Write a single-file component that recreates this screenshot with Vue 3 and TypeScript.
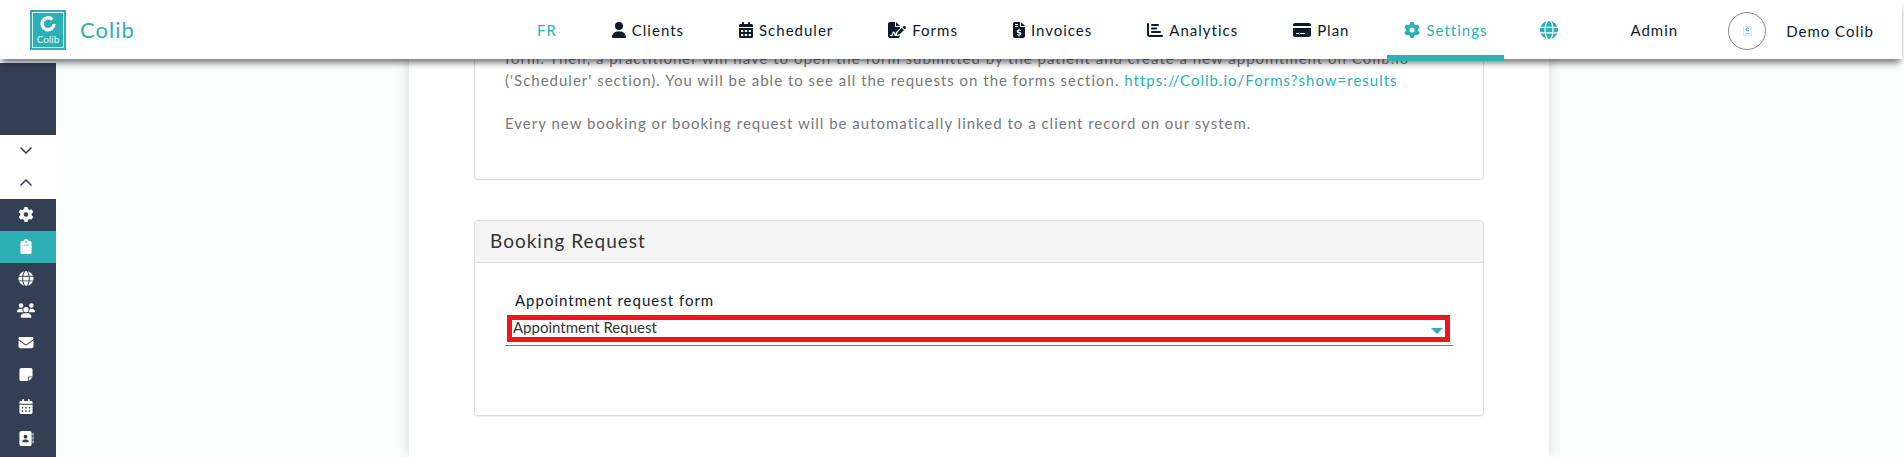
<script setup lang="ts">
import { ref } from 'vue'

interface Icon { box: string; w: number; d: string }
interface NavItem { label: string; icon: string; active?: boolean }

const icons: Record<string, Icon> = {
  user: { box: '0 0 448 512', w: 14, d: 'M224 256A128 128 0 1 0 224 0a128 128 0 1 0 0 256zm-45.7 48C79.8 304 0 383.8 0 482.3C0 498.7 13.3 512 29.7 512H418.3c16.4 0 29.7-13.3 29.7-29.7C448 383.8 368.2 304 269.7 304H178.3z' },
  calendar: { box: '0 0 448 512', w: 14, d: 'M96 32V64H48C21.500 64 0 85.500 0 112v48H448V112c0-26.500-21.500-48-48-48H352V32a32 32 0 0 0-64 0V64H160V32a32 32 0 0 0-64 0zM0 192H448V464c0 26.500-21.500 48-48 48H48c-26.500 0-48-21.500-48-48zM64 256v64h72v-64zM188 256v64h72v-64zM312 256v64h72v-64zM64 384v64h72v-64zM188 384v64h72v-64zM312 384v64h72v-64z' },
  calendarDays: { box: '0 0 448 512', w: 14, d: 'M96 32V64H48C21.500 64 0 85.500 0 112v48H448V112c0-26.500-21.500-48-48-48H352V32a32 32 0 0 0-64 0V64H160V32a32 32 0 0 0-64 0zM0 192H448V464c0 26.500-21.500 48-48 48H48c-26.500 0-48-21.500-48-48zM80 272v48h48v-48zM200 272v48h48v-48zM320 272v48h48v-48zM80 384v48h48v-48zM200 384v48h48v-48zM320 384v48h48v-48z' },
  signature: { box: '0 0 576 512', w: 18, d: 'M64 0C28.700 0 0 28.700 0 64V448c0 35.300 28.700 64 64 64H320c35.300 0 64-28.700 64-64V428l-40 12-96 8H80a16 16 0 0 1 0-32h16c14 0 26-9 30-22l20-66c5-16 19-26 35-26 17 0 31 11 36 27l17 55 7-5 11-44 9-19L384 198V160H256c-17.700 0-32-14.300-32-32V0zM256 0V128H384zM181 342l-24 76c-3 8-7 16-13 22h88l-26-20zM549 139c-16-16-41-16-57 0l-29 29 71 71 29-29c16-16 16-41 0-57zM441 191L312 320c-4 4-7 9-8 15l-15 60c-2 7 5 14 12 12l60-15c6-1 11-4 15-8L511 261z' },
  invoice: { box: '0 0 384 512', w: 12, d: 'M64 0C28.700 0 0 28.700 0 64V448c0 35.300 28.700 64 64 64H320c35.300 0 64-28.700 64-64V160H256c-17.700 0-32-14.300-32-32V0zM256 0V128H384zM64 64h96v32H64zM64 128h96v32H64zM174 216h36v30c16 2 32 6 44 11l-10 38c-20-8-38-12-54-11-14 1-22 6-22 13 0 10 12 14 42 23 32 9 57 23 57 56 0 29-21 52-57 58v30h-36v-30c-20-2-39-8-55-16l12-37c23 10 43 16 61 15 16 0 27-6 27-16 0-11-12-15-42-24-31-9-57-23-57-56 0-30 21-49 54-55z' },
  chart: { box: '0 0 512 512', w: 16, d: 'M32 32a32 32 0 0 1 32 32V400c0 8.800 7.200 16 16 16H480a32 32 0 0 1 0 64H80c-44.200 0-80-35.800-80-80V64a32 32 0 0 1 32-32zM128 96a32 32 0 0 1 32-32H352a32 32 0 0 1 0 64H160a32 32 0 0 1-32-32zM160 176H288a32 32 0 0 1 0 64H160a32 32 0 0 1 0-64zM160 288H416a32 32 0 0 1 0 64H160a32 32 0 0 1 0-64z' },
  card: { box: '0 0 576 512', w: 18, d: 'M64 32C28.700 32 0 60.700 0 96v32H576V96c0-35.300-28.700-64-64-64zM576 192H0V416c0 35.300 28.700 64 64 64H512c35.300 0 64-28.700 64-64zM96 352h96v32H96zM224 352h160v32H224z' },
  gear: { box: '0 0 512 512', w: 16, d: 'M495.9 166.6c3.2 8.7 .5 18.4-6.4 24.6l-43.3 39.4c1.1 8.3 1.7 16.8 1.7 25.4s-.6 17.1-1.7 25.4l43.3 39.4c6.9 6.2 9.600 15.900 6.400 24.600c-4.400 11.900-9.700 23.300-15.800 34.300l-4.700 8.100c-6.600 11-14 21.400-22.100 31.200c-5.900 7.200-15.700 9.600-24.500 6.800l-55.700-17.700c-13.400 10.300-28.200 18.900-44 25.400l-12.500 57.100c-2 9.100-9 16.300-18.200 17.800c-13.800 2.300-28 3.500-42.500 3.500s-28.700-1.200-42.500-3.500c-9.200-1.500-16.200-8.700-18.200-17.800l-12.500-57.100c-15.800-6.500-30.600-15.100-44-25.400L83.100 425.900c-8.800 2.800-18.600 .3-24.500-6.800c-8.100-9.800-15.500-20.200-22.100-31.200l-4.700-8.100c-6.100-11-11.400-22.400-15.800-34.300c-3.200-8.700-.5-18.400 6.400-24.600l43.300-39.400C64.600 273.100 64 264.600 64 256s.6-17.100 1.700-25.400L22.400 191.200c-6.900-6.200-9.600-15.900-6.400-24.600c4.400-11.900 9.700-23.300 15.800-34.300l4.700-8.100c6.600-11 14-21.400 22.100-31.200c5.900-7.200 15.700-9.600 24.500-6.800l55.700 17.700c13.400-10.300 28.200-18.900 44-25.400l12.500-57.100c2-9.100 9-16.300 18.200-17.800C227.300 1.200 241.500 0 256 0s28.700 1.200 42.500 3.500c9.200 1.500 16.200 8.700 18.200 17.800l12.500 57.100c15.800 6.500 30.600 15.100 44 25.400l55.700-17.700c8.800-2.800 18.600-.3 24.500 6.800c8.100 9.800 15.500 20.200 22.100 31.200l4.700 8.100c6.100 11 11.400 22.400 15.800 34.300zM256 336a80 80 0 1 0 0-160 80 80 0 1 0 0 160z' },
  globe: { box: '0 0 512 512', w: 18, d: 'M352 256c0 22.2-1.2 43.6-3.3 64H163.3c-2.2-20.4-3.3-41.8-3.3-64s1.2-43.6 3.3-64H348.7c2.2 20.4 3.3 41.8 3.3 64zm28.800-64H503.900c5.300 20.500 8.100 41.900 8.100 64s-2.800 43.500-8.100 64H380.800c2.100-20.600 3.200-42 3.200-64s-1.100-43.400-3.200-64zm112.600-32H376.700c-10-63.900-29.800-117.400-55.300-151.600c78.300 20.700 142 77.500 171.900 151.600zm-149.100 0H167.700c6.100-36.400 15.500-68.600 27-94.700c10.500-23.600 22.200-40.700 33.500-51.500C239.400 3.200 248.700 0 256 0s16.600 3.200 27.800 13.800c11.300 10.800 23 27.900 33.500 51.500c11.600 26 20.900 58.200 27 94.700zm-209 0H18.600C48.600 85.900 112.200 29.100 190.600 8.400C165.100 42.600 145.300 96.100 135.300 160zM8.100 192H131.200c-2.100 20.600-3.200 42-3.200 64s1.100 43.400 3.200 64H8.100C2.800 299.500 0 278.100 0 256s2.800-43.500 8.100-64zM194.700 446.600c-11.600-26-20.900-58.200-27-94.600H344.300c-6.100 36.400-15.500 68.600-27 94.600c-10.500 23.600-22.200 40.700-33.500 51.500C272.600 508.800 263.300 512 256 512s-16.600-3.200-27.800-13.800c-11.300-10.800-23-27.900-33.500-51.500zM135.300 352c10 63.900 29.800 117.400 55.300 151.600C112.200 482.900 48.600 426.100 18.600 352H135.300zm358.100 0c-30 74.100-93.600 130.900-171.900 151.600c25.500-34.200 45.200-87.700 55.300-151.600H493.400z' },
  clipboard: { box: '0 0 384 512', w: 12, d: 'M192 0c-41.800 0-77.400 26.700-90.500 64H64C28.700 64 0 92.700 0 128V448c0 35.300 28.700 64 64 64H320c35.300 0 64-28.700 64-64V128c0-35.300-28.700-64-64-64H282.500C269.400 26.700 233.800 0 192 0zm0 64a32 32 0 1 1 0 64 32 32 0 1 1 0-64zM112 192H272a16 16 0 0 1 0 32H112a16 16 0 0 1 0-32z' },
  users: { box: '0 0 640 512', w: 18, d: 'M144 0a80 80 0 1 1 0 160A80 80 0 1 1 144 0zM512 0a80 80 0 1 1 0 160A80 80 0 1 1 512 0zM0 298.700C0 239.800 47.800 192 106.700 192h42.700c15.900 0 31 3.500 44.600 9.700-1.300 7.200-1.900 14.700-1.900 22.300 0 38.200 16.800 72.500 43.300 96H21.300C9.600 320 0 310.400 0 298.700zM405.300 320c26.600-23.500 43.300-57.800 43.300-96 0-7.600-.7-15-1.900-22.300 13.600-6.300 28.700-9.700 44.600-9.700h42.700C592.200 192 640 239.800 640 298.700c0 11.800-9.600 21.300-21.300 21.300zM224 224a96 96 0 1 1 192 0 96 96 0 1 1-192 0zM128 485.300C128 411.700 187.700 352 261.300 352h117.400C452.300 352 512 411.700 512 485.300c0 14.700-11.900 26.700-26.700 26.700H154.700c-14.700 0-26.700-11.900-26.700-26.700z' },
  mail: { box: '0 0 512 512', w: 15, d: 'M48 64C21.500 64 0 85.500 0 112c0 15.100 7.100 29.300 19.200 38.400L236.800 313.600c11.400 8.500 27 8.500 38.400 0L492.800 150.400c12.100-9.100 19.200-23.300 19.200-38.400 0-26.500-21.500-48-48-48zM0 176V384c0 35.300 28.700 64 64 64H448c35.300 0 64-28.700 64-64V176L294.400 339.200c-22.800 17.100-54 17.100-76.800 0z' },
  note: { box: '0 0 448 512', w: 13, d: 'M64 32C28.700 32 0 60.700 0 96V416c0 35.300 28.700 64 64 64H288V368c0-26.500 21.500-48 48-48H448V96c0-35.300-28.700-64-64-64zM448 352H336c-8.800 0-16 7.200-16 16V480z' },
  contacts: { box: '0 0 512 512', w: 15, d: 'M96 0C60.700 0 32 28.700 32 64V448c0 35.300 28.700 64 64 64H384c35.300 0 64-28.700 64-64V64c0-35.300-28.700-64-64-64zM208 288h64c44.200 0 80 35.800 80 80 0 8.800-7.200 16-16 16H144c-8.800 0-16-7.200-16-16 0-44.200 35.800-80 80-80zM240 128a64 64 0 1 1 0 128 64 64 0 1 1 0-128zM480 64h32v96h-32zM480 192h32v96h-32zM480 320h32v96h-32z' },
}

const nav: NavItem[] = [
  { label: 'Clients', icon: 'user' },
  { label: 'Scheduler', icon: 'calendar' },
  { label: 'Forms', icon: 'signature' },
  { label: 'Invoices', icon: 'invoice' },
  { label: 'Analytics', icon: 'chart' },
  { label: 'Plan', icon: 'card' },
  { label: 'Settings', icon: 'gear', active: true },
]

const side = [
  { icon: 'gear', name: 'General' },
  { icon: 'clipboard', name: 'Booking', active: true },
  { icon: 'globe', name: 'Website' },
  { icon: 'users', name: 'Team' },
  { icon: 'mail', name: 'Messages' },
  { icon: 'note', name: 'Notes' },
  { icon: 'calendarDays', name: 'Calendar' },
  { icon: 'contacts', name: 'Contacts' },
]

const requestForm = ref('Appointment Request')
</script>

<template>
  <div class="page">
    <header class="topbar">
      <a href="#" class="brand">
        <svg class="logo" viewBox="0 0 36 40" aria-hidden="true">
          <rect width="36" height="40" fill="#2cb0b6" />
          <rect x="2.500" y="2.500" width="31" height="35" fill="none" stroke="#d8f2f3" />
          <path d="M22.300 9.600A6 6 0 1 0 24 14" fill="none" stroke="#fff" stroke-width="3.400" />
          <text x="18" y="33" text-anchor="middle" font-size="10" fill="#e6f8f8">Colib</text>
        </svg>
        <span>Colib</span>
      </a>
      <nav class="nav">
        <a href="#" class="item teal">FR</a>
        <a v-for="n in nav" :key="n.label" href="#" class="item" :class="{ active: n.active }">
          <svg :viewBox="icons[n.icon].box" :width="icons[n.icon].w" height="16" aria-hidden="true"><path :d="icons[n.icon].d" fill-rule="evenodd" /></svg>
          {{ n.label }}
        </a>
        <a href="#" class="item teal language" aria-label="Language">
          <svg :viewBox="icons.globe.box" width="18" height="18" aria-hidden="true"><path :d="icons.globe.d" /></svg>
        </a>
        <a href="#" class="item admin">Admin</a>
        <a href="#" class="profile">
          <span class="avatar">
            <svg viewBox="0 0 9 10" width="9" height="10" aria-hidden="true">
              <rect x="0.500" y="0.500" width="8" height="9" fill="#f2fbfb" stroke="#cdeeef" />
              <path d="M5.600 2.400A1.500 1.500 0 1 0 6 4" fill="none" stroke="#2cb0b6" />
              <path d="M2 7.500H7" stroke="#9fdcdf" />
            </svg>
          </span>
          Demo Colib
        </a>
      </nav>
    </header>

    <div class="body">
      <aside class="sidebar">
        <div class="toggles">
          <button type="button" aria-label="Next section"><svg viewBox="0 0 12 7" width="12" height="7"><path d="M0.500 0.500L6 6L11.500 0.500" /></svg></button>
          <button type="button" aria-label="Previous section"><svg viewBox="0 0 12 7" width="12" height="7"><path d="M0.500 6.500L6 1L11.500 6.500" /></svg></button>
        </div>
        <a v-for="s in side" :key="s.name" href="#" class="side" :class="{ on: s.active }" :aria-label="s.name">
          <svg :viewBox="icons[s.icon].box" width="18" height="15" aria-hidden="true"><path :d="icons[s.icon].d" fill-rule="evenodd" /></svg>
        </a>
      </aside>

      <main class="panel">
        <section class="card first">
          <p>
            form. Then, a practitioner will have to open the form submitted by the patient and create a new appointment on Colib.io<br />
            ('Scheduler' section). You will be able to see all the requests on the forms section. <a href="#">https://Colib.io/Forms?show=results</a>
          </p>
          <p>Every new booking or booking request will be automatically linked to a client record on our system.</p>
        </section>

        <section class="card">
          <h2>Booking Request</h2>
          <div class="fields">
            <label for="request-form">Appointment request form</label>
            <div class="field">
              <div class="marked">
                <select id="request-form" v-model="requestForm">
                  <option>Appointment Request</option>
                </select>
                <svg viewBox="0 0 12 6" width="12" height="6" aria-hidden="true"><path d="M0 0H12L6 6Z" /></svg>
              </div>
            </div>
          </div>
        </section>
      </main>
    </div>
  </div>
</template>

<style>
body {
  background: #fbfdfc;
}
</style>

<style scoped>
.page {
  display: flex;
  flex-direction: column;
  height: 100vh;
  overflow: hidden;
  padding-right: 2px;
  box-sizing: border-box;
  font-family: Lato, sans-serif;
  font-size: 15px;
  line-height: 22px;
  letter-spacing: 1px;
  color: #777;
}
a {
  color: #2cb0b6;
  text-decoration: none;
}
svg {
  fill: currentColor;
  flex: none;
}
.topbar {
  position: sticky;
  top: 0;
  z-index: 2;
  flex: none;
  display: flex;
  justify-content: space-between;
  height: 59px;
  padding: 0 28px 0 30px;
  background: #fff;
  box-shadow: 0 6px 6px -2px rgba(20, 20, 30, 0.55);
}
.brand {
  display: flex;
  align-items: center;
  gap: 14px;
  font-size: 22px;
}
.logo {
  width: 36px;
  height: 40px;
  letter-spacing: 0;
}
.nav {
  display: flex;
  gap: 21px;
}
.item,
.profile {
  display: flex;
  align-items: center;
  gap: 6px;
  color: #0b1b2b;
  white-space: nowrap;
}
.item {
  box-sizing: border-box;
  height: 61px;
  padding: 4px 17px 0;
  border-bottom: 6px solid transparent;
}
.item.teal,
.item.active {
  color: #2cb0b6;
}
.item.active {
  border-color: #2cb0b6;
}
.item.language {
  padding-left: 15px;
}
.admin {
  margin-left: 17px;
}
.profile {
  gap: 20px;
  margin-left: 12px;
  padding-top: 2px;
}
.avatar {
  display: flex;
  align-items: center;
  justify-content: center;
  box-sizing: border-box;
  width: 38px;
  height: 38px;
  border: 1px solid #888;
  border-radius: 50%;
}
.body {
  flex: 1;
  display: flex;
  min-height: 0;
}
.sidebar {
  flex: none;
  width: 56px;
  margin-top: 4px;
  padding-top: 72px;
  box-sizing: border-box;
  background: #333f52;
}
.toggles {
  background: #fff;
}
.toggles button,
.side {
  display: flex;
  align-items: center;
  justify-content: center;
  box-sizing: border-box;
  width: 100%;
  height: 32px;
  padding: 0 4px 1px 0;
  border: 0;
  background: none;
  color: #fff;
}
.toggles path {
  fill: none;
  stroke: #333f52;
  stroke-width: 1.500;
}
.side.on {
  background: #2cb0b6;
}
.panel {
  width: 1140px;
  box-sizing: border-box;
  margin: -13px auto 0;
  padding: 0 65px;
  background: #fff;
  box-shadow: 0 0 12px rgba(0, 0, 0, 0.14);
}
.card {
  box-sizing: border-box;
  margin-bottom: 40px;
  border: 1px solid #ddd;
  border-radius: 4px;
  background: #fff;
  box-shadow: 0 1px 1px rgba(0, 0, 0, 0.05);
}
.first {
  padding: 0 30px 45px;
}
p {
  margin: 0 0 21px;
}
.first p:last-child {
  margin: 0;
}
h2 {
  margin: 0;
  padding: 9px 15px 10px;
  border-bottom: 1px solid #ddd;
  background: #f4f4f4;
  border-radius: 4px 4px 0 0;
  font-size: 19px;
  font-weight: 400;
  color: #333;
}
.fields {
  padding: 26px 30px 69px;
}
label {
  display: block;
  padding-left: 10px;
  color: #0b1b2b;
}
.field {
  border-bottom: 1px solid #777;
  padding: 4px 3px 3px 2px;
}
.marked {
  display: flex;
  align-items: center;
  padding: 0 2px 0 1px;
  border: 5px solid #ed1520;
  color: #2cb0b6;
}
.marked svg {
  margin-top: 5px;
}
select {
  flex: 1;
  height: 17px;
  padding: 0 0 2px;
  border: 0;
  appearance: none;
  background: none;
  font: 15px/15px Lato, sans-serif;
  letter-spacing: 0;
  color: #333;
}
</style>
